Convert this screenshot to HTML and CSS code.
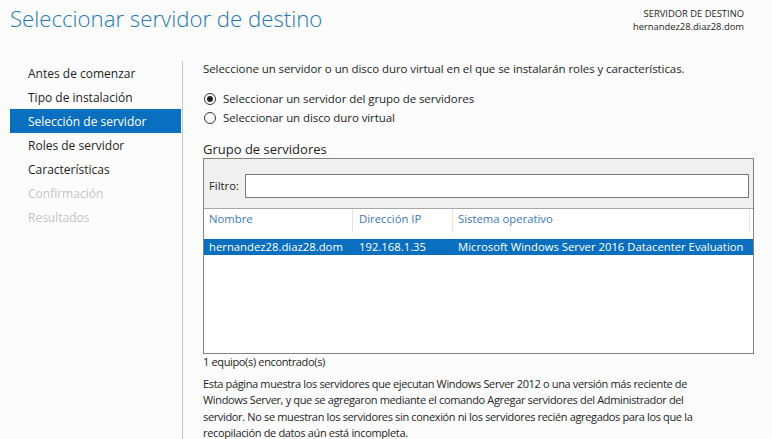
FILE: index.html
```html
<!DOCTYPE html>
<html lang="es">
<head>
<meta charset="utf-8">
<link rel="stylesheet" href="styles.css">
</head>
<body>
<header class="top">
  <h1 class="title">Seleccionar servidor de destino</h1>
  <div class="dest">
    <div>SERVIDOR DE DESTINO</div>
    <div>hernandez28.diaz28.dom</div>
  </div>
</header>
<div class="main">
  <nav class="side">
    <div class="item">Antes de comenzar</div>
    <div class="item">Tipo de instalación</div>
    <div class="item active">Selección de servidor</div>
    <div class="item">Roles de servidor</div>
    <div class="item">Características</div>
    <div class="item disabled">Confirmación</div>
    <div class="item disabled">Resultados</div>
  </nav>
  <section class="content">
    <p class="intro">Seleccione un servidor o un disco duro virtual en el que se instalarán roles y características.</p>
    <div class="radios">
      <label class="radio"><span class="dot on"></span>Seleccionar un servidor del grupo de servidores</label>
      <label class="radio"><span class="dot"></span>Seleccionar un disco duro virtual</label>
    </div>
    <h2 class="group">Grupo de servidores</h2>
    <div class="box">
      <div class="filter">
        <span class="flabel">Filtro:</span>
        <div class="finput"></div>
      </div>
      <div class="list">
        <div class="thead">
          <div class="c1">Nombre</div>
          <div class="c2">Dirección IP</div>
          <div class="c3">Sistema operativo</div>
        </div>
        <div class="trow sel">
          <div class="c1">hernandez28.diaz28.dom</div>
          <div class="c2">192.168.1.35</div>
          <div class="c3">Microsoft Windows Server 2016 Datacenter Evaluation</div>
        </div>
      </div>
    </div>
    <p class="count">1 equipo(s) encontrado(s)</p>
    <p class="note">Esta página muestra los servidores que ejecutan Windows Server 2012 o una versión más reciente de<br>Windows Server, y que se agregaron mediante el comando Agregar servidores del Administrador del<br>servidor. No se muestran los servidores sin conexión ni los servidores recién agregados para los que la<br>recopilación de datos aún está incompleta.</p>
  </section>
</div>
</body>
</html>
```
FILE: styles.css
```css
* { box-sizing: border-box; }
html, body { margin: 0; padding: 0; }
body {
  background: #fcfcfc;
  font-family: "Open Sans", "Noto Sans", sans-serif;
  font-size: 12px;
  color: #1e1e1e;
  width: 772px;
  height: 439px;
  overflow: hidden;
}
.top {
  display: flex;
  justify-content: space-between;
  align-items: flex-start;
  height: 61px;
}
.title {
  margin: 3px 0 0 10px;
  font-size: 22.2px;
  font-weight: 300;
  line-height: 32px;
  color: #1c78b5;
}
.dest {
  margin: 7px 28px 0 0;
  text-align: right;
  font-size: 9.4px;
  line-height: 13px;
  color: #1e1e1e;
}
.main {
  display: flex;
  height: 378px;
}
.side {
  margin-left: 10px;
  width: 173px;
  padding-right: 1px;
  padding-top: 0;
  border-right: 1px solid #c6c6c6;
}
.item {
  height: 24px;
  line-height: 25px;
  padding-left: 18px;
  font-size: 12px;
}
.item.active { background: #0a6fbe; color: #fff; }
.item.disabled { color: #c4c4c4; }
.content {
  padding-left: 20px;
  width: 571px;
}
.intro {
  margin: 0;
  line-height: 16px;
  font-size: 11.5px;
  letter-spacing: -0.07px;
}
.radios {
  display: flex;
  flex-direction: column;
  margin-top: 14px;
  gap: 3px;
  font-size: 11.5px;
  letter-spacing: -0.08px;
}
.radio {
  display: flex;
  align-items: center;
  height: 16px;
  line-height: 16px;
}
.dot {
  width: 12px;
  height: 12px;
  border: 1px solid #333;
  border-radius: 50%;
  margin: 0 7px 0 1px;
  background: #fff;
  display: flex;
  align-items: center;
  justify-content: center;
}
.dot.on::after {
  content: "";
  width: 6px;
  height: 6px;
  border-radius: 50%;
  background: #222;
}
.group {
  margin: 14px 0 0;
  font-size: 13px;
  font-weight: 400;
  line-height: 18px;
}
.box {
  margin-top: 0;
  width: 551px;
  height: 196px;
  border: 1px solid #838383;
  background: #fff;
  display: flex;
  flex-direction: column;
}
.filter {
  background: #f0f0f0;
  height: 50px;
  flex: none;
  border-bottom: 1px solid #a8a8a8;
  display: flex;
  align-items: center;
  padding: 4px 4px 0 5px;
  font-size: 11.3px;
}
.flabel { margin-right: 6px; }
.finput {
  flex: 1;
  height: 24px;
  background: #fff;
  border: 1px solid #7a7a7a;
}
.list { flex: 1; font-size: 11.3px; }
.thead, .trow { display: flex; white-space: nowrap; }
.thead {
  height: 24px;
  line-height: 20px;
  color: #3b78c4;
}
.thead > div {
  border-right: 1px solid #e3e3e3;
}
.thead .c3 { width: 297px; }
.trow { margin-top: 6px; height: 16px; line-height: 16px; }
.trow.sel { background: #0a6fbe; color: #fff; }
.c1 { width: 149px; padding-left: 5px; }
.c2 { width: 100px; padding-left: 6px; }
.c3 { flex: none; width: 300px; padding-left: 5px; }
.count {
  margin: 0;
  line-height: 16px;
  font-size: 11px;
  letter-spacing: -0.35px;
}
.note {
  margin: 6px 0 0;
  line-height: 16.3px;
  font-size: 11px;
  letter-spacing: -0.35px;
}
```
